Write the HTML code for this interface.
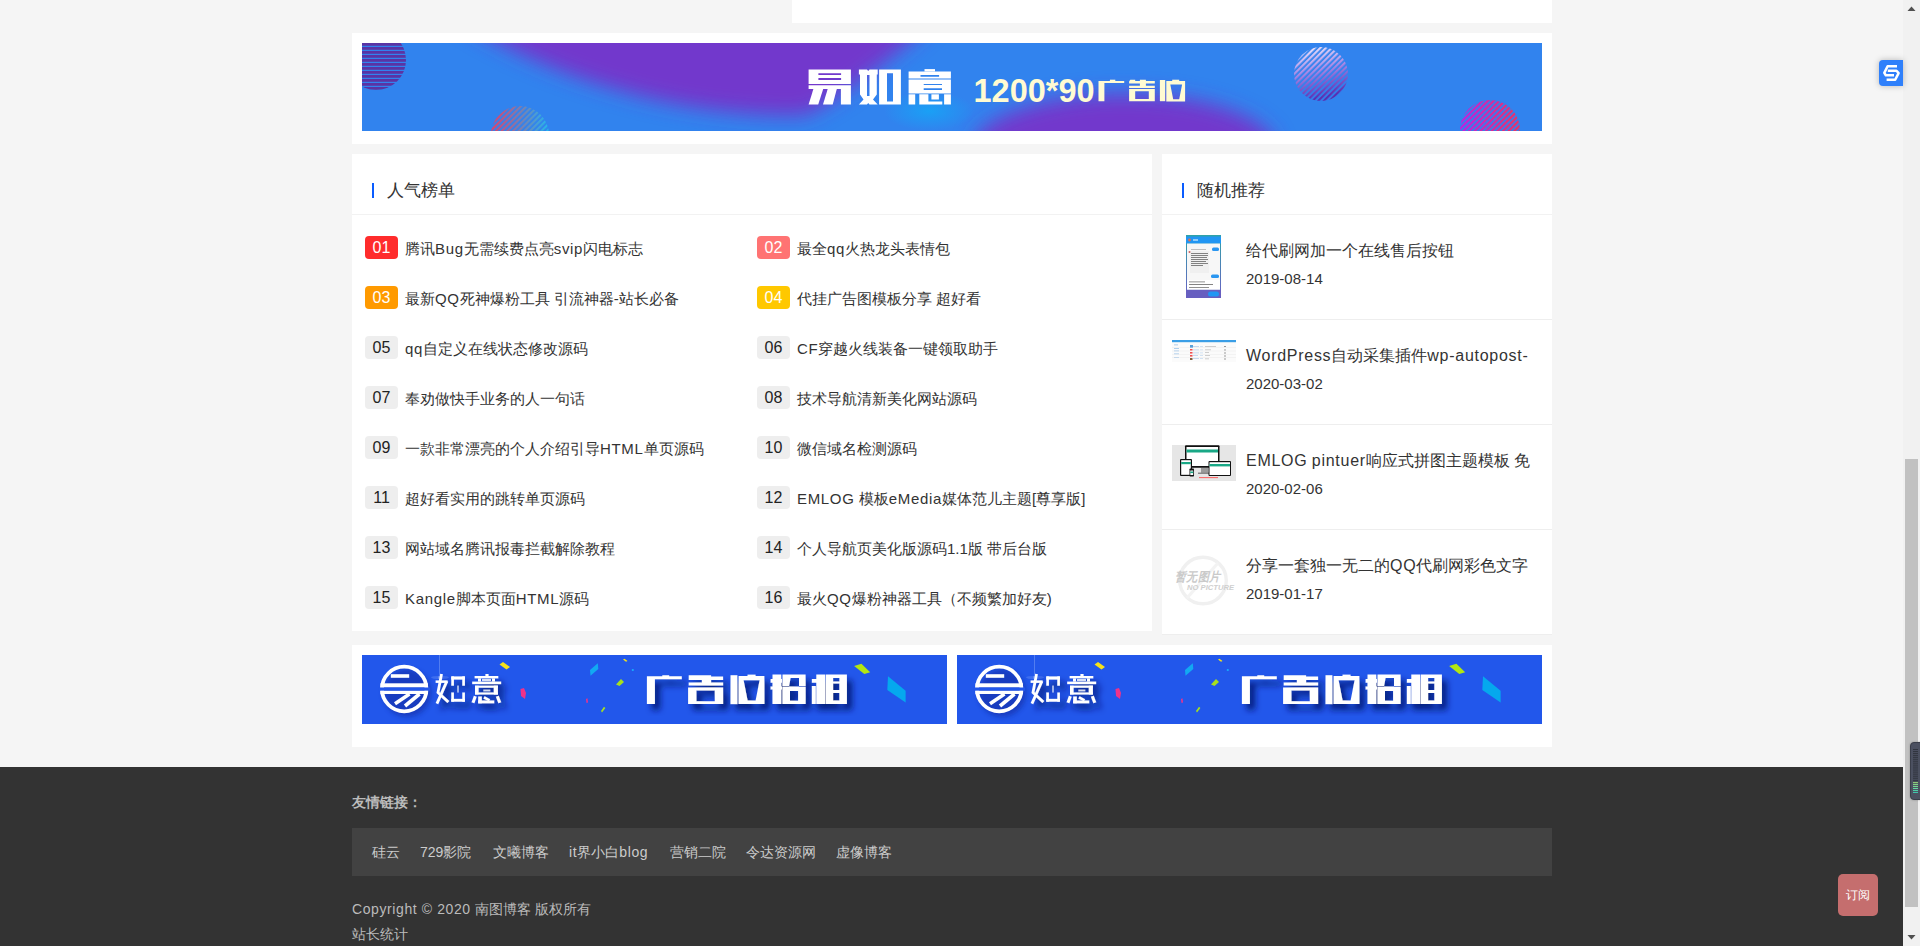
<!DOCTYPE html>
<html><head><meta charset="utf-8">
<style>
*{margin:0;padding:0;box-sizing:border-box}
html,body{width:1920px;height:946px;overflow:hidden}
body{background:#f5f5f5;font-family:"Liberation Sans",sans-serif;color:#333;position:relative}
.abs{position:absolute}
.wbox{position:absolute;background:#fff}
.bar{position:absolute;width:2px;height:15px;background:#0a5cff}
.ttl{position:absolute;font-size:17px;line-height:20px;color:#333;white-space:nowrap}
.hline{position:absolute;height:1px;background:#f2f2f2}
.badge{position:absolute;width:33px;height:23px;border-radius:4px;background:#eee;color:#222;font-size:16px;line-height:24px;text-align:center}
.li{position:absolute;font-size:15px;line-height:22px;color:#333;white-space:nowrap}
.rt{position:absolute;font-size:16px;line-height:20px;color:#333;white-space:nowrap}
.rd{position:absolute;font-size:15px;line-height:20px;color:#333;white-space:nowrap}
.thumb{position:absolute;width:64px;height:64px;overflow:hidden}
.lat{letter-spacing:0.045em}
.flink{position:absolute;font-size:14px;line-height:20px;color:#ccc;white-space:nowrap}
</style></head><body>
<!-- top white box -->
<div class="wbox" style="left:792px;top:0;width:760px;height:23px"></div>
<!-- ad box -->
<div class="wbox" style="left:352px;top:33px;width:1200px;height:111px"></div>
<div class="abs" id="banner1" style="left:362px;top:43px;width:1180px;height:88px;overflow:hidden">
<svg width="1180" height="88" viewBox="0 0 1180 88">
<defs>
<filter id="bl" x="-20%" y="-50%" width="140%" height="200%"><feGaussianBlur stdDeviation="10"/></filter>
<pattern id="hs" width="4" height="4" patternUnits="userSpaceOnUse"><rect width="4" height="2.8" fill="#5a34a4"/></pattern>
<pattern id="ds" width="4" height="4" patternUnits="userSpaceOnUse" patternTransform="rotate(-45)"><rect width="4" height="2.2" fill="#fff"/></pattern>
<pattern id="ds2" width="4" height="4" patternUnits="userSpaceOnUse" patternTransform="rotate(-45)"><rect width="4" height="2.2" fill="#fff"/></pattern>
<linearGradient id="cg1" x1="0" y1="0" x2="1" y2="0"><stop offset="0" stop-color="#e0406a"/><stop offset="1" stop-color="#20b8f0"/></linearGradient>
<linearGradient id="cg2" x1="0" y1="0" x2="0.25" y2="1"><stop offset="0" stop-color="#f4f2ff"/><stop offset="0.5" stop-color="#a888e6"/><stop offset="1" stop-color="#5a2eb0"/></linearGradient>
<linearGradient id="cg3" x1="0" y1="0" x2="1" y2="0"><stop offset="0" stop-color="#c020e0"/><stop offset="1" stop-color="#f03060"/></linearGradient>
<mask id="m1"><rect width="1180" height="88" fill="url(#ds)"/></mask>
<radialGradient id="lb" cx="0.5" cy="0.5" r="0.5"><stop offset="0" stop-color="#1aa0f5"/><stop offset="1" stop-color="#1aa0f5" stop-opacity="0"/></radialGradient>
</defs>
<rect width="1180" height="88" fill="#3183ee"/>
<g filter="url(#bl)">
<path d="M95,-25 L575,-25 C530,15 485,52 445,72 C400,74 340,68 285,55 C215,38 150,12 95,-25 Z" fill="#7238cc"/>
<ellipse cx="762" cy="107" rx="152" ry="56" fill="#7238cc"/>
</g>
<ellipse cx="567" cy="68" rx="45" ry="20" fill="url(#lb)"/>
<circle cx="14" cy="17" r="30" fill="url(#hs)"/>
<circle cx="158" cy="92" r="29" fill="url(#cg1)" mask="url(#m1)"/>
<circle cx="959" cy="31" r="27" fill="url(#cg2)" mask="url(#m1)"/>
<circle cx="1128" cy="87" r="30" fill="url(#cg3)" mask="url(#m1)"/>
<text x="0" y="0" font-size="33.5" font-weight="bold" fill="#fffbd2" font-family="Liberation Sans,sans-serif" transform="translate(611.5,59.4) scale(0.97,1)">1200*90</text>
<g fill="#fffbd2">
<path d="M747.9,36.7 H753.3 V38 H747.9 Z"/>
<path d="M736.5,37.9 H762.2 V39.9 H742.4 V58.2 H736.5 Z"/>
<path d="M768.3,36.8 H773.2 V38 H792.8 V40.6 H783.9 V42.8 H792.8 V44.9 H767.1 V42.8 H777.9 V40.6 H767.1 V38.5 Z M777.9,36.8 H783.9 V38 H777.9 Z"/>
<path fill-rule="evenodd" d="M767.1,46.1 H792.8 V58.3 H767.1 Z M773.2,48.2 H786.8 V56.1 H773.2 Z"/>
<path d="M797.9,37 H803.2 V58.2 H797.9 Z"/>
<path d="M810.2,36.7 H817.2 V38 H810.2 Z"/>
<path fill-rule="evenodd" d="M804.3,37.9 H823.1 V58.5 H804.3 Z M808.3,41.4 H820.1 L817.2,56.3 H811.2 Z"/>
</g>
<g id="yry" fill="#fff">
<path fill-rule="evenodd" d="M446.6,26.5 H488.9 V40.9 H446.6 Z M456.4,30.2 H479.1 V32 H456.4 Z M456.4,35 H479.1 V37 H456.4 Z"/>
<path d="M446.6,42.2 H488.9 V61.5 H478.9 V46.1 H446.6 Z"/>
<path d="M451.4,46 L461.2,46 L456.2,61.5 L446.6,61.5 Z"/>
<path d="M465.7,46 L474.8,46 L470.7,61.5 L461,61.5 Z"/>
<path fill-rule="evenodd" d="M496.9,26.5 H505 L506.2,28 L507.5,26.5 H515.7 V31.5 H514.8 V51.5 L511,56.5 L515.7,61.5 H507.5 L506.2,60 L505,61.5 H496.9 L501.5,56.5 L498,51.5 V31.5 H496.9 Z M505,32 H507.5 V52.9 H505 Z"/>
<path fill-rule="evenodd" d="M517.1,26.5 H538.9 V61.5 H517.1 Z M525,30.2 H531 V58.4 H525 Z"/>
<path d="M562.5,26.1 H573 V28.5 H562.5 Z"/>
<path fill-rule="evenodd" d="M546.6,28.4 H588.9 V35.6 H546.6 Z M558.5,32 H577.1 V33.8 H558.5 Z"/>
<path fill-rule="evenodd" d="M546.6,36.6 H588.9 V50.4 H546.6 Z M561.7,40.9 H580 V42 H561.7 Z M561.7,45.2 H580 V47 H561.7 Z"/>
<path d="M546.6,51.3 H553.2 V61.5 H546.6 Z"/>
<path d="M557.3,51.3 H566.4 V58.4 H580.3 V61.5 H557.3 Z"/>
<path d="M569.4,51.3 H576.9 V56.5 H569.4 Z"/>
<path d="M582.1,51.3 H588.9 V61.5 H582.1 Z"/>
</g>
</svg>
</div>

<!-- hot list -->
<div class="wbox" style="left:352px;top:154px;width:800px;height:477px"></div>
<div class="hline" style="left:352px;top:214px;width:800px"></div>
<div class="bar" style="left:372px;top:183px"></div>
<div class="ttl" style="left:387px;top:181px">人气榜单</div>
<div id="hotlist">
<div class="badge" style="left:365px;top:236px;background:#ff2c2c;color:#fff">01</div>
<div class="li" style="left:405px;top:238px">腾讯<span class="lat">Bug</span>无需续费点亮<span class="lat">svip</span>闪电标志</div>
<div class="badge" style="left:757px;top:236px;background:#ff7373;color:#fff">02</div>
<div class="li" style="left:797px;top:238px">最全<span class="lat">qq</span>火热龙头表情包</div>
<div class="badge" style="left:365px;top:286px;background:#ff9a00;color:#fff">03</div>
<div class="li" style="left:405px;top:288px">最新<span class="lat">QQ</span>死神爆粉工具 引流神器-站长必备</div>
<div class="badge" style="left:757px;top:286px;background:#ffc800;color:#fff">04</div>
<div class="li" style="left:797px;top:288px">代挂广告图模板分享 超好看</div>
<div class="badge" style="left:365px;top:336px">05</div>
<div class="li" style="left:405px;top:338px"><span class="lat">qq</span>自定义在线状态修改源码</div>
<div class="badge" style="left:757px;top:336px">06</div>
<div class="li" style="left:797px;top:338px"><span class="lat">CF</span>穿越火线装备一键领取助手</div>
<div class="badge" style="left:365px;top:386px">07</div>
<div class="li" style="left:405px;top:388px">奉劝做快手业务的人一句话</div>
<div class="badge" style="left:757px;top:386px">08</div>
<div class="li" style="left:797px;top:388px">技术导航清新美化网站源码</div>
<div class="badge" style="left:365px;top:436px">09</div>
<div class="li" style="left:405px;top:438px">一款非常漂亮的个人介绍引导<span class="lat">HTML</span>单页源码</div>
<div class="badge" style="left:757px;top:436px">10</div>
<div class="li" style="left:797px;top:438px">微信域名检测源码</div>
<div class="badge" style="left:365px;top:486px">11</div>
<div class="li" style="left:405px;top:488px">超好看实用的跳转单页源码</div>
<div class="badge" style="left:757px;top:486px">12</div>
<div class="li" style="left:797px;top:488px"><span class="lat">EMLOG</span> 模板<span class="lat">eMedia</span>媒体范儿主题[尊享版]</div>
<div class="badge" style="left:365px;top:536px">13</div>
<div class="li" style="left:405px;top:538px">网站域名腾讯报毒拦截解除教程</div>
<div class="badge" style="left:757px;top:536px">14</div>
<div class="li" style="left:797px;top:538px">个人导航页美化版源码1.1版 带后台版</div>
<div class="badge" style="left:365px;top:586px">15</div>
<div class="li" style="left:405px;top:588px"><span class="lat">Kangle</span>脚本页面<span class="lat">HTML</span>源码</div>
<div class="badge" style="left:757px;top:586px">16</div>
<div class="li" style="left:797px;top:588px">最火<span class="lat">QQ</span>爆粉神器工具（不频繁加好友)</div>
</div>

<!-- random -->
<div class="wbox" style="left:1162px;top:154px;width:390px;height:481px"></div>
<div class="hline" style="left:1162px;top:214px;width:390px"></div>
<div class="bar" style="left:1182px;top:183px"></div>
<div class="ttl" style="left:1197px;top:181px">随机推荐</div>
<div id="randlist">
<div class="rt" style="left:1246px;top:241px">给代刷网加一个在线售后按钮</div>
<div class="rd" style="left:1246px;top:269px">2019-08-14</div>
<div class="hline" style="left:1162px;top:319px;width:390px;background:#eee"></div>
<div class="thumb" id="th0" style="left:1172px;top:235px">
<svg width="64" height="64" viewBox="0 0 64 64">
<defs><linearGradient id="g0" x1="0" y1="0" x2="0" y2="1"><stop offset="0" stop-color="#2fa3a8"/><stop offset="1" stop-color="#6a5fc4"/></linearGradient></defs>
<rect x="14" y="0" width="35" height="63" fill="url(#g0)"/>
<rect x="14" y="1.5" width="35" height="7" fill="#2196f3"/>
<rect x="15" y="8.5" width="33" height="46" fill="#f7f7f7"/>
<rect x="15" y="45" width="33" height="9.5" fill="#fff"/>
<circle cx="17.5" cy="5" r="1.4" fill="#e07050"/>
<rect x="40" y="12.5" width="7" height="3.5" rx="1.5" fill="#2a96f0"/>
<rect x="18" y="16" width="19" height="22" fill="#f0f0f0"/>
<g fill="#666"><rect x="19" y="18" width="17" height="0.8"/><rect x="19" y="20" width="17" height="0.8"/><rect x="19" y="22" width="16" height="0.8"/><rect x="19" y="24" width="17" height="0.8"/><rect x="19" y="26" width="15" height="0.8"/><rect x="19" y="28" width="17" height="0.8"/><rect x="19" y="30" width="12" height="0.8"/></g><g fill="#fff"><rect x="21" y="4.5" width="5" height="1"/></g><rect x="19" y="14" width="15" height="0.6" fill="#999"/>
<circle cx="17.5" cy="17" r="1" fill="#d06060"/>
<rect x="39" y="39.5" width="8" height="3.5" rx="1.5" fill="#2a96f0"/>
<g fill="#777"><rect x="17" y="46.5" width="16" height="0.8"/><rect x="17" y="49" width="24" height="0.9"/><rect x="17" y="52" width="20" height="0.8"/></g>
<rect x="14" y="55" width="35" height="8" fill="#675fc0"/>
<rect x="36" y="56.5" width="11" height="5" rx="2.5" fill="#2196f3"/>
</svg></div>
<div class="rt" style="left:1246px;top:346px"><span class="lat">WordPress</span>自动采集插件<span class="lat">wp-autopost-</span></div>
<div class="rd" style="left:1246px;top:374px">2020-03-02</div>
<div class="hline" style="left:1162px;top:424px;width:390px;background:#eee"></div>
<div class="thumb" id="th1" style="left:1172px;top:340px">
<svg width="64" height="64" viewBox="0 0 64 64">
<rect x="0" y="0" width="64" height="22" fill="#fbfbfb"/>
<rect x="0" y="0" width="64" height="2.2" fill="#3a9ee6"/>
<g fill="#9cc4ea"><rect x="2" y="4.5" width="4" height="0.8"/><rect x="2" y="8" width="5" height="0.8"/><rect x="2" y="10.5" width="5" height="0.8"/><rect x="2" y="13.5" width="5" height="0.8"/><rect x="2" y="17" width="5" height="0.8"/></g>
<rect x="18" y="5" width="3" height="3" fill="#5aa0d8"/>
<g fill="#f05050"><rect x="18" y="9" width="2.5" height="1.6"/><rect x="18" y="12" width="2.5" height="1.6"/><rect x="18" y="15" width="2.5" height="1.6"/></g>
<rect x="18" y="18" width="2.5" height="2" fill="#806040"/>
<g fill="#b9d3ee"><rect x="21" y="6" width="6" height="0.8"/><rect x="21" y="9.5" width="6" height="0.8"/><rect x="21" y="12.5" width="6" height="0.8"/><rect x="21" y="15" width="5" height="0.8"/><rect x="21" y="18" width="6" height="0.8"/></g>
<g fill="#c8dcf0"><rect x="28" y="6" width="3" height="0.8"/><rect x="28" y="9.5" width="3" height="0.8"/><rect x="28" y="12.5" width="3" height="0.8"/><rect x="28" y="15" width="3" height="0.8"/><rect x="28" y="18" width="3" height="0.8"/></g>
<g fill="#bbb"><rect x="33" y="6" width="11" height="0.7"/><rect x="33" y="9.5" width="6" height="0.7"/><rect x="33" y="12" width="4" height="0.7"/><rect x="33" y="15" width="5" height="0.7"/><rect x="33" y="18.5" width="4" height="0.7"/></g>
<g fill="#999"><rect x="52" y="6" width="2" height="1"/><rect x="52" y="9.5" width="2" height="1"/><rect x="52" y="12.5" width="2" height="1"/><rect x="52" y="15.5" width="2" height="1"/><rect x="52" y="18.5" width="2" height="1"/></g>
<g fill="#e8e8e8"><rect x="0" y="7.3" width="64" height="0.4"/><rect x="0" y="10.8" width="64" height="0.4"/><rect x="0" y="14" width="64" height="0.4"/><rect x="0" y="17" width="64" height="0.4"/></g>
</svg></div>
<div class="rt" style="left:1246px;top:451px"><span class="lat">EMLOG</span> <span class="lat">pintuer</span>响应式拼图主题模板 免</div>
<div class="rd" style="left:1246px;top:479px">2020-02-06</div>
<div class="hline" style="left:1162px;top:529px;width:390px;background:#eee"></div>
<div class="thumb" id="th2" style="left:1172px;top:445px">
<svg width="64" height="64" viewBox="0 0 64 64">
<rect x="0" y="0" width="64" height="36" fill="#e6e6e6"/>
<rect x="13" y="0.3" width="34.5" height="22.5" rx="1" fill="#111"/>
<rect x="14.5" y="2" width="31.5" height="19" fill="#fff"/>
<rect x="14.5" y="4.5" width="31.5" height="3" fill="#19a886"/>
<rect x="29" y="23" width="7" height="5" fill="#9a9a9a"/>
<rect x="26" y="27.5" width="13" height="1.5" fill="#888"/>
<rect x="8" y="14" width="12" height="17" rx="1" fill="#111"/>
<rect x="9.2" y="15.2" width="9.6" height="14.6" fill="#fff"/>
<rect x="9.2" y="17" width="9.6" height="2.2" fill="#19a886"/>
<rect x="17.5" y="23.5" width="4.5" height="8" rx="0.8" fill="#111"/>
<rect x="18.3" y="25.5" width="2.9" height="4.5" fill="#fff"/>
<rect x="18.3" y="26.5" width="2.9" height="1.6" fill="#19a886"/>
<rect x="36.5" y="16" width="22.5" height="15" rx="1" fill="#111"/>
<rect x="37.5" y="17.2" width="20.5" height="12.8" fill="#fff"/>
<rect x="37.5" y="19" width="20.5" height="2.4" fill="#19a886"/>
<rect x="27" y="32.2" width="19" height="0.9" fill="#ff5050"/>
</svg></div>
<div class="rt" style="left:1246px;top:556px">分享一套独一无二的<span class="lat">QQ</span>代刷网彩色文字</div>
<div class="rd" style="left:1246px;top:584px">2019-01-17</div>
<div class="hline" style="left:1162px;top:634px;width:390px;background:#eee"></div>
<div class="thumb" id="th3" style="left:1172px;top:550px">
<svg width="64" height="64" viewBox="0 0 64 64">
<circle cx="31" cy="30.5" r="23.3" fill="none" stroke="#f0f0f0" stroke-width="3.4"/>
<line x1="15" y1="48" x2="46" y2="13" stroke="#f3f3f3" stroke-width="3"/>
<text x="2.8" y="31" font-size="12.5" fill="#cacaca" font-weight="bold" font-style="italic" font-family="Liberation Sans,sans-serif" textLength="46" lengthAdjust="spacingAndGlyphs">暂无图片</text>
<text x="15" y="40.2" font-size="7.4" fill="#cfcfcf" font-weight="bold" font-style="italic" font-family="Liberation Sans,sans-serif" textLength="47" lengthAdjust="spacingAndGlyphs">NO PICTURE</text>
</svg></div>
</div>

<!-- ad2 -->
<div class="wbox" style="left:352px;top:645px;width:1200px;height:102px"></div>
<div class="abs" style="left:362px;top:655px;width:585px;height:69px;overflow:hidden"><svg width="585" height="69" viewBox="0 0 585 69" style="position:absolute;left:0;top:0">
<defs><filter id="lsha" x="-30%" y="-30%" width="160%" height="160%"><feGaussianBlur stdDeviation="2.5"/></filter></defs>
<rect width="585" height="69" fill="#2257eb"/>
<g filter="url(#lsha)" opacity="0.45" transform="translate(3,4)" fill="#0a1e8c"><circle cx="42.2" cy="34" r="24"/></g>
<circle cx="42.2" cy="34" r="22.3" fill="none" stroke="#fff" stroke-width="3.8"/>
<rect x="18.5" y="28.3" width="47.4" height="4.2" fill="#fff"/>
<rect x="17" y="32.5" width="51" height="3.3" fill="#2257eb"/>
<rect x="18.5" y="35.8" width="47.4" height="3.2" fill="#fff"/>
<g stroke="#fff" stroke-width="3.6" stroke-linecap="butt">
<line x1="28.8" y1="21" x2="47.2" y2="21"/>
<line x1="47.5" y1="39" x2="33" y2="48.8"/>
<line x1="57.5" y1="39" x2="43" y2="51"/>
</g>
<path d="M137.5,9.6 L141,7 L148,12 L144.5,14.6 Z" fill="#f6e21a"/>
<path d="M158.5,34 L162,33 L164,38 L163,44 L159,41 Z" fill="#f0328a"/>
<path d="M228,15 L235.8,8.3 L236.3,14 L228.5,20.8 Z" fill="#12a9f2"/>
<path d="M261,4.5 L262.5,3.75 L265.5,6 L264,6.7 Z" fill="#f6e21a"/>
<circle cx="270.8" cy="15" r="1.1" fill="#18b0ff"/>
<path d="M254,29.5 L259,24 L262,27 L257.5,31 Z" fill="#a6e01e"/>
<path d="M224,44 L225.5,43.3 L226,47.5 L224.5,48 Z" fill="#f0328a"/>
<path d="M239,56 L242,51.7 L243.4,53 L240,57.5 Z" fill="#a6e01e"/>
<path d="M492.1,10.9 L499.4,8.8 L508.2,17.2 L502.3,19.1 Z" fill="#b2e612"/>
<path d="M526,21.2 L543.6,35.8 L543.6,47.4 L525.3,35 Z" fill="#05a8ee"/>
<defs><filter id="gsa" x="-10%" y="-20%" width="130%" height="160%"><feDropShadow dx="5" dy="6" stdDeviation="3.4" flood-color="#061670" flood-opacity="0.9"/></filter></defs>
<g fill="#fff" filter="url(#gsa)">
<path d="M300.3,20.2 H307.2 V21.5 H300.3 Z M284.9,21.3 H319.8 V24.2 H292.9 V49.1 H284.9 Z"/>
<path d="M326.7,20.2 H339.9 V20.2 H349.1 V21.6 H361.1 V25 H349.1 V27.6 H361.1 V30.5 H326.7 V27.6 H339.9 V25 H326.7 Z"/>
<path fill-rule="evenodd" d="M326.1,32.5 H361.1 V49.1 H326.1 Z M334.4,35.6 H352.8 V46.2 H334.4 Z"/>
<path d="M368.5,20.2 H375.4 V49.1 H368.5 Z"/>
<path d="M385.5,19.6 H393.6 V21.2 H385.5 Z"/>
<path fill-rule="evenodd" d="M376.6,21.1 H402.4 V48.9 H376.6 Z M381.6,25.2 H397.6 L393.6,45.5 H385.6 Z"/>
<path d="M410.5,19.6 H419.3 V48.9 H410.5 Z M408.6,23.9 H420 V27.7 H408.6 Z M408.6,31.4 H420 V34.6 H408.6 Z"/>
<path fill-rule="evenodd" d="M420.5,19.6 H443.6 V31.1 H420.5 Z M428.6,23 H437 V31.2 H427 Z"/>
<path fill-rule="evenodd" d="M420.5,31.8 H443.6 V48.9 H420.5 Z M428,36.1 H436.1 V45.8 H428 Z"/>
<path d="M454.3,19.6 H463 V48.9 H454.3 Z M449.9,23.9 H454.3 V27.7 H449.9 Z M449.9,31.1 H453.8 V48.9 H449.9 Z"/>
<path fill-rule="evenodd" d="M463.6,19.6 H484.9 V48.9 H463.6 Z M471.1,23 H477.4 V26.4 H471.1 Z M471.1,28.6 H477.4 V34.9 H471.1 Z M471.1,38 H477.4 V45.5 H471.1 Z"/>
</g>
<g opacity="0.35"><rect x="77" y="0" width="0.8" height="20" fill="#cfe0ff"/><ellipse cx="78" cy="22.5" rx="9" ry="1.6" fill="#aac4ff" opacity="0.6"/><circle cx="78" cy="22.5" r="2" fill="#e8f0ff"/></g>
<g filter="url(#gsa)">
<g fill="none" stroke="#fff" stroke-width="2.8" stroke-linecap="square">
<polyline points="79.3,20.3 76,37.5 85.3,46"/>
<line x1="84.3" y1="27.5" x2="75.5" y2="47.3"/>
</g>
<g fill="#fff">
<rect x="73.6" y="25.4" width="12" height="2.5"/>
<rect x="89.3" y="21.4" width="13.6" height="3.2"/>
<rect x="89.3" y="21.4" width="2.6" height="9.3"/><rect x="89.3" y="37.5" width="2.6" height="9.2"/>
<rect x="100.3" y="21.4" width="2.6" height="9.3"/><rect x="100.3" y="37.5" width="2.6" height="9.2"/>
<rect x="89.3" y="43.9" width="13.6" height="2.8"/>
<rect x="95.3" y="30.7" width="1.4" height="6.8" opacity="0.7"/>
<rect x="123.4" y="19" width="3.2" height="2"/>
<rect x="112.6" y="21" width="23.7" height="2.4"/>
<rect x="116" y="23.4" width="3" height="3.2"/><rect x="130" y="23.4" width="3" height="3.2"/><rect x="120" y="24.2" width="9" height="1.6"/>
<rect x="110.2" y="26.6" width="28.9" height="2.5"/>
<rect x="113" y="30.7" width="3.6" height="8.8"/><rect x="131.8" y="30.7" width="4.1" height="8.8"/>
<rect x="113" y="30.7" width="22.9" height="2"/><rect x="113" y="37.5" width="22.9" height="2"/>
<rect x="121.4" y="34.7" width="6.8" height="1.6" opacity="0.75"/>
<rect x="116.2" y="41.5" width="3.6" height="6.8"/><rect x="116.2" y="45.5" width="16" height="2.8"/>
</g>
<g stroke="#fff" stroke-width="3" stroke-linecap="butt">
<line x1="113.3" y1="41.2" x2="111" y2="47.8"/>
<line x1="135.3" y1="41.2" x2="137.8" y2="47.8"/>
<line x1="122" y1="42.3" x2="127.5" y2="45.3" stroke-width="2.5"/>
</g>
</g>
</svg>
</div>
<div class="abs" style="left:957px;top:655px;width:585px;height:69px;overflow:hidden"><svg width="585" height="69" viewBox="0 0 585 69" style="position:absolute;left:0;top:0">
<defs><filter id="lshb" x="-30%" y="-30%" width="160%" height="160%"><feGaussianBlur stdDeviation="2.5"/></filter></defs>
<rect width="585" height="69" fill="#2257eb"/>
<g filter="url(#lshb)" opacity="0.45" transform="translate(3,4)" fill="#0a1e8c"><circle cx="42.2" cy="34" r="24"/></g>
<circle cx="42.2" cy="34" r="22.3" fill="none" stroke="#fff" stroke-width="3.8"/>
<rect x="18.5" y="28.3" width="47.4" height="4.2" fill="#fff"/>
<rect x="17" y="32.5" width="51" height="3.3" fill="#2257eb"/>
<rect x="18.5" y="35.8" width="47.4" height="3.2" fill="#fff"/>
<g stroke="#fff" stroke-width="3.6" stroke-linecap="butt">
<line x1="28.8" y1="21" x2="47.2" y2="21"/>
<line x1="47.5" y1="39" x2="33" y2="48.8"/>
<line x1="57.5" y1="39" x2="43" y2="51"/>
</g>
<path d="M137.5,9.6 L141,7 L148,12 L144.5,14.6 Z" fill="#f6e21a"/>
<path d="M158.5,34 L162,33 L164,38 L163,44 L159,41 Z" fill="#f0328a"/>
<path d="M228,15 L235.8,8.3 L236.3,14 L228.5,20.8 Z" fill="#12a9f2"/>
<path d="M261,4.5 L262.5,3.75 L265.5,6 L264,6.7 Z" fill="#f6e21a"/>
<circle cx="270.8" cy="15" r="1.1" fill="#18b0ff"/>
<path d="M254,29.5 L259,24 L262,27 L257.5,31 Z" fill="#a6e01e"/>
<path d="M224,44 L225.5,43.3 L226,47.5 L224.5,48 Z" fill="#f0328a"/>
<path d="M239,56 L242,51.7 L243.4,53 L240,57.5 Z" fill="#a6e01e"/>
<path d="M492.1,10.9 L499.4,8.8 L508.2,17.2 L502.3,19.1 Z" fill="#b2e612"/>
<path d="M526,21.2 L543.6,35.8 L543.6,47.4 L525.3,35 Z" fill="#05a8ee"/>
<defs><filter id="gsb" x="-10%" y="-20%" width="130%" height="160%"><feDropShadow dx="5" dy="6" stdDeviation="3.4" flood-color="#061670" flood-opacity="0.9"/></filter></defs>
<g fill="#fff" filter="url(#gsb)">
<path d="M300.3,20.2 H307.2 V21.5 H300.3 Z M284.9,21.3 H319.8 V24.2 H292.9 V49.1 H284.9 Z"/>
<path d="M326.7,20.2 H339.9 V20.2 H349.1 V21.6 H361.1 V25 H349.1 V27.6 H361.1 V30.5 H326.7 V27.6 H339.9 V25 H326.7 Z"/>
<path fill-rule="evenodd" d="M326.1,32.5 H361.1 V49.1 H326.1 Z M334.4,35.6 H352.8 V46.2 H334.4 Z"/>
<path d="M368.5,20.2 H375.4 V49.1 H368.5 Z"/>
<path d="M385.5,19.6 H393.6 V21.2 H385.5 Z"/>
<path fill-rule="evenodd" d="M376.6,21.1 H402.4 V48.9 H376.6 Z M381.6,25.2 H397.6 L393.6,45.5 H385.6 Z"/>
<path d="M410.5,19.6 H419.3 V48.9 H410.5 Z M408.6,23.9 H420 V27.7 H408.6 Z M408.6,31.4 H420 V34.6 H408.6 Z"/>
<path fill-rule="evenodd" d="M420.5,19.6 H443.6 V31.1 H420.5 Z M428.6,23 H437 V31.2 H427 Z"/>
<path fill-rule="evenodd" d="M420.5,31.8 H443.6 V48.9 H420.5 Z M428,36.1 H436.1 V45.8 H428 Z"/>
<path d="M454.3,19.6 H463 V48.9 H454.3 Z M449.9,23.9 H454.3 V27.7 H449.9 Z M449.9,31.1 H453.8 V48.9 H449.9 Z"/>
<path fill-rule="evenodd" d="M463.6,19.6 H484.9 V48.9 H463.6 Z M471.1,23 H477.4 V26.4 H471.1 Z M471.1,28.6 H477.4 V34.9 H471.1 Z M471.1,38 H477.4 V45.5 H471.1 Z"/>
</g>
<g opacity="0.35"><rect x="77" y="0" width="0.8" height="20" fill="#cfe0ff"/><ellipse cx="78" cy="22.5" rx="9" ry="1.6" fill="#aac4ff" opacity="0.6"/><circle cx="78" cy="22.5" r="2" fill="#e8f0ff"/></g>
<g filter="url(#gsb)">
<g fill="none" stroke="#fff" stroke-width="2.8" stroke-linecap="square">
<polyline points="79.3,20.3 76,37.5 85.3,46"/>
<line x1="84.3" y1="27.5" x2="75.5" y2="47.3"/>
</g>
<g fill="#fff">
<rect x="73.6" y="25.4" width="12" height="2.5"/>
<rect x="89.3" y="21.4" width="13.6" height="3.2"/>
<rect x="89.3" y="21.4" width="2.6" height="9.3"/><rect x="89.3" y="37.5" width="2.6" height="9.2"/>
<rect x="100.3" y="21.4" width="2.6" height="9.3"/><rect x="100.3" y="37.5" width="2.6" height="9.2"/>
<rect x="89.3" y="43.9" width="13.6" height="2.8"/>
<rect x="95.3" y="30.7" width="1.4" height="6.8" opacity="0.7"/>
<rect x="123.4" y="19" width="3.2" height="2"/>
<rect x="112.6" y="21" width="23.7" height="2.4"/>
<rect x="116" y="23.4" width="3" height="3.2"/><rect x="130" y="23.4" width="3" height="3.2"/><rect x="120" y="24.2" width="9" height="1.6"/>
<rect x="110.2" y="26.6" width="28.9" height="2.5"/>
<rect x="113" y="30.7" width="3.6" height="8.8"/><rect x="131.8" y="30.7" width="4.1" height="8.8"/>
<rect x="113" y="30.7" width="22.9" height="2"/><rect x="113" y="37.5" width="22.9" height="2"/>
<rect x="121.4" y="34.7" width="6.8" height="1.6" opacity="0.75"/>
<rect x="116.2" y="41.5" width="3.6" height="6.8"/><rect x="116.2" y="45.5" width="16" height="2.8"/>
</g>
<g stroke="#fff" stroke-width="3" stroke-linecap="butt">
<line x1="113.3" y1="41.2" x2="111" y2="47.8"/>
<line x1="135.3" y1="41.2" x2="137.8" y2="47.8"/>
<line x1="122" y1="42.3" x2="127.5" y2="45.3" stroke-width="2.5"/>
</g>
</g>
</svg>
</div>

<!-- footer -->
<div class="abs" style="left:0;top:767px;width:1903px;height:179px;background:#333"></div>
<div class="abs" style="left:352px;top:792px;font-size:14px;line-height:20px;font-weight:bold;color:#bbb;white-space:nowrap">友情链接：</div>
<div class="abs" style="left:352px;top:828px;width:1200px;height:48px;background:#424242"></div>
<div class="flink" style="left:372px;top:842px">硅云</div>
<div class="flink" style="left:420px;top:842px">729影院</div>
<div class="flink" style="left:493px;top:842px">文曦博客</div>
<div class="flink" style="left:569px;top:842px"><span class="lat">it</span>界小白<span class="lat">blog</span></div>
<div class="flink" style="left:670px;top:842px">营销二院</div>
<div class="flink" style="left:746px;top:842px">令达资源网</div>
<div class="flink" style="left:836px;top:842px">虚像博客</div>
<div class="abs" style="left:352px;top:899px;font-size:14px;line-height:20px;color:#bbb;white-space:nowrap"><span style="letter-spacing:0.6px">Copyright © 2020</span> 南图博客 版权所有</div>
<div class="abs" style="left:352px;top:924px;font-size:14px;line-height:20px;color:#bbb;white-space:nowrap">站长统计</div>

<!-- scrollbar -->
<div class="abs" style="left:1903px;top:0;width:17px;height:946px;background:#f1f1f1"></div>
<svg class="abs" style="left:1903px;top:0" width="17" height="17"><path d="M4.5,11 L8.5,6.5 L12.5,11 Z" fill="#505050"/></svg>
<svg class="abs" style="left:1903px;top:929px" width="17" height="17"><path d="M4.5,6 L8.5,10.5 L12.5,6 Z" fill="#505050"/></svg>
<div class="abs" style="left:1905px;top:459px;width:13px;height:448px;background:#c1c1c1"></div>

<div class="abs" style="left:1910px;top:742px;width:14px;height:58px;border-radius:4px;background:#4b5060;border:1px solid #3a3e4a;box-shadow:0 0 2px rgba(0,0,0,.3)"></div>
<svg class="abs" style="left:1912px;top:747px" width="8" height="50"><rect x="1" y="2.00" width="5" height="1.0" fill="#30343e"/><rect x="1" y="3.95" width="5" height="1.0" fill="#30343e"/><rect x="1" y="5.90" width="5" height="1.0" fill="#30343e"/><rect x="1" y="7.85" width="5" height="1.0" fill="#30343e"/><rect x="1" y="9.80" width="5" height="1.0" fill="#30343e"/><rect x="1" y="11.75" width="5" height="1.0" fill="#30343e"/><rect x="1" y="13.70" width="5" height="1.0" fill="#30343e"/><rect x="1" y="15.65" width="5" height="1.0" fill="#30343e"/><rect x="1" y="17.60" width="5" height="1.0" fill="#30343e"/><rect x="1" y="19.55" width="5" height="1.0" fill="#30343e"/><rect x="1" y="21.50" width="5" height="1.0" fill="#30343e"/><rect x="1" y="23.45" width="5" height="1.0" fill="#30343e"/><rect x="1" y="25.40" width="5" height="1.0" fill="#30343e"/><rect x="1" y="27.35" width="5" height="1.0" fill="#30343e"/><rect x="1" y="29.30" width="5" height="1.0" fill="#30343e"/><rect x="1" y="31.25" width="5" height="1.0" fill="#30343e"/><rect x="1" y="33.20" width="5" height="1.0" fill="#30343e"/><rect x="1" y="35.15" width="5" height="1.0" fill="#98e07a"/><rect x="1" y="37.10" width="5" height="1.0" fill="#88e08a"/><rect x="1" y="39.05" width="5" height="1.0" fill="#78dc95"/><rect x="1" y="41.00" width="5" height="1.0" fill="#62d8a0"/><rect x="1" y="42.95" width="5" height="1.0" fill="#50d4aa"/><rect x="1" y="44.90" width="5" height="1.0" fill="#40d0b4"/></svg>
<!-- subscribe -->
<div class="abs" style="left:1838px;top:874px;width:40px;height:42px;border-radius:5px;background:#c56e6e;color:#fff;font-size:12px;line-height:42px;text-align:center">订阅</div>
<!-- float icon -->
<div class="abs" style="left:1879px;top:60px;width:24px;height:26px;border-radius:4px 0 0 4px;background:#2f80fb;box-shadow:0 0 6px rgba(0,0,0,.25)"></div>
<svg class="abs" style="left:1879px;top:60px" width="24" height="26" viewBox="0 0 24 26">
<g fill="none" stroke="#fff" stroke-width="2.5" stroke-linejoin="round">
<path d="M18,6.3 L8.6,6.3 L5.3,12.9 L6.8,15.2 L15,15.2"/>
<path d="M8.8,10.7 L17.5,10.7 L19.6,13.1 L16.2,19.8 L7.6,19.8"/>
</g>
</svg>
</body></html>
